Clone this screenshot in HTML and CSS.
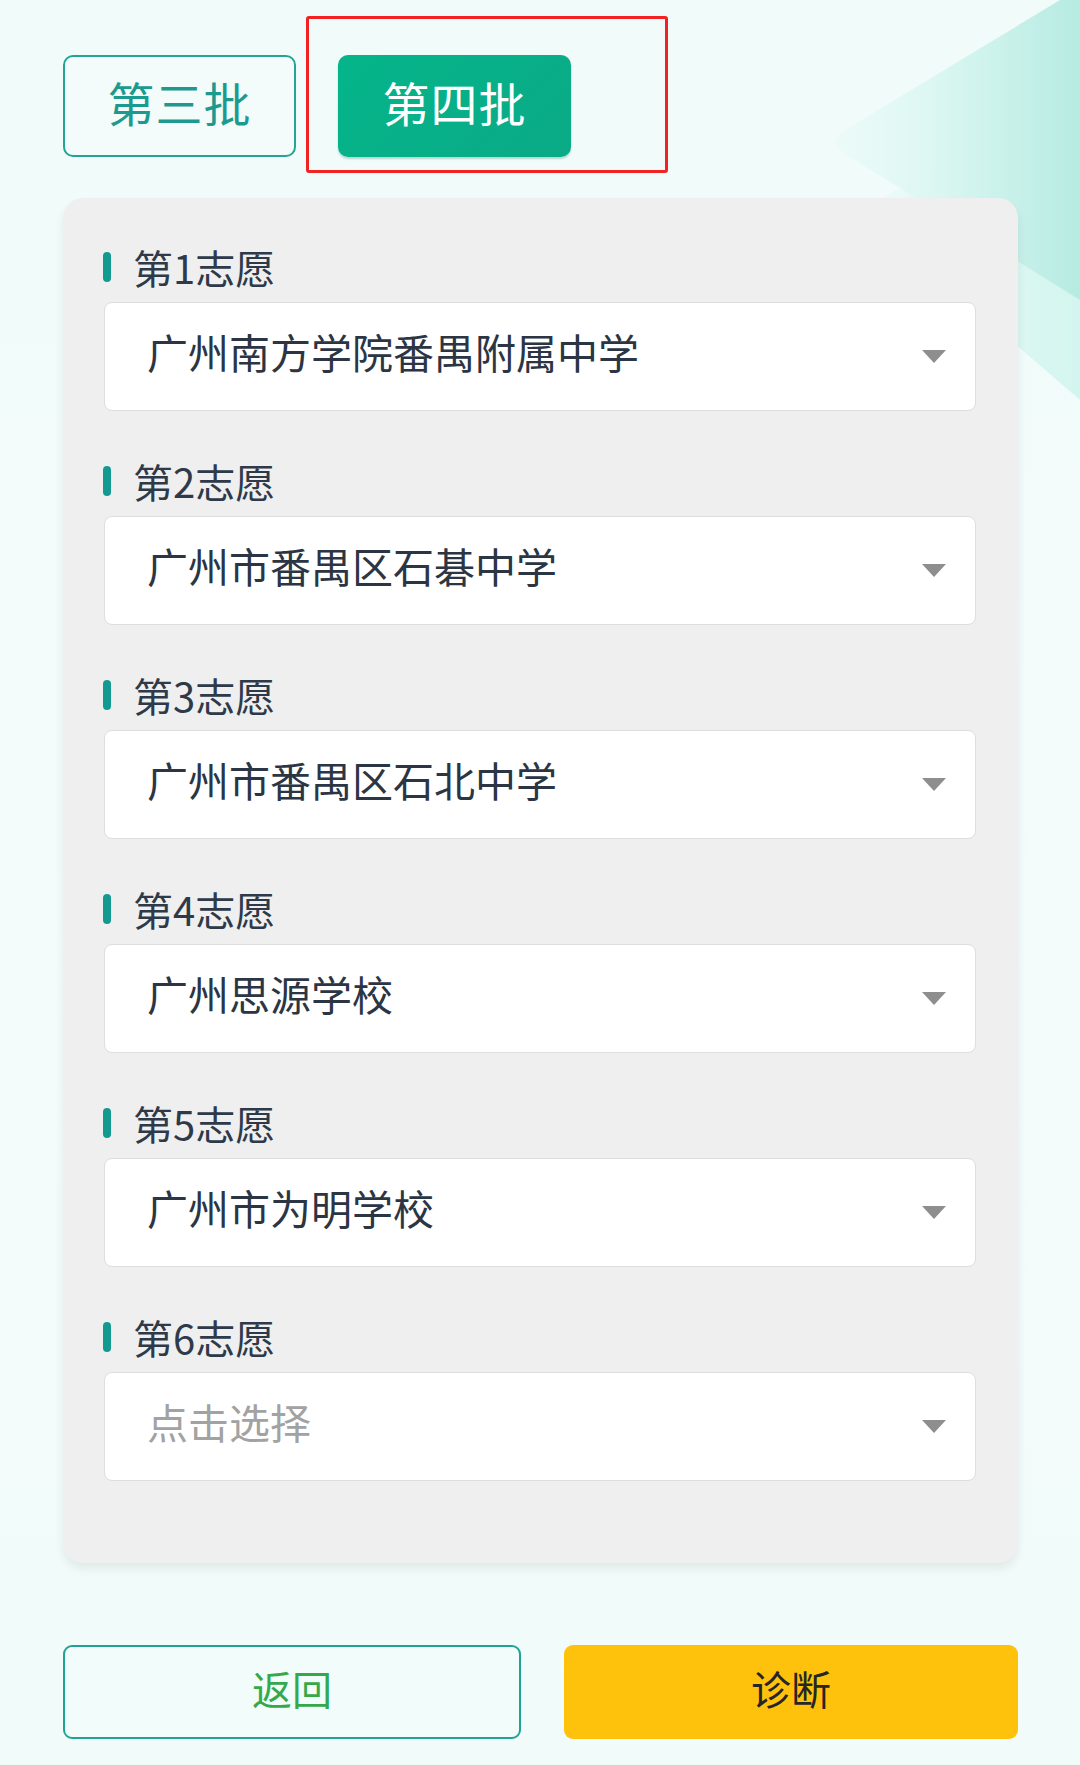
FILE: index.html
```html
<!DOCTYPE html>
<html lang="zh-CN">
<head>
<meta charset="utf-8">
<title>志愿填报</title>
<link rel="stylesheet" href="styles.css">
</head>
<body>
<div class="page">
  <svg class="deco" width="300" height="450" viewBox="780 0 300 450" aria-hidden="true">
    <defs>
      <linearGradient id="gA" x1="0" y1="0" x2="1" y2="0">
        <stop offset="0" stop-color="#e6faf6" stop-opacity="0.2"/>
        <stop offset="0.35" stop-color="#e0f8f4" stop-opacity="0.9"/>
        <stop offset="1" stop-color="#d4f5ef"/>
      </linearGradient>
      <linearGradient id="gB" x1="0" y1="0" x2="1" y2="0">
        <stop offset="0" stop-color="#e9faf7" stop-opacity="0.7"/>
        <stop offset="0.4" stop-color="#dcf7f2"/>
        <stop offset="1" stop-color="#b6ebe2"/>
      </linearGradient>
      <linearGradient id="gW" x1="0" y1="0" x2="1" y2="1">
        <stop offset="0" stop-color="#ffffff" stop-opacity="0"/>
        <stop offset="1" stop-color="#ffffff" stop-opacity="0.8"/>
      </linearGradient>
    </defs>
    <path d="M860 210 L1080 90 L1080 400 Z" fill="url(#gA)"/>
    <path d="M845 130 Q826 142 845 154 L1080 300 L1080 0 L1060 0 Z" fill="url(#gB)"/>
  </svg>

  <div class="tabs">
    <div class="tab">第三批</div>
    <div class="tab tab-active">第四批</div>
  </div>
  <div class="highlight"></div>

  <div class="card">
    <div class="field">
      <div class="label"><span class="bar"></span>第1志愿</div>
      <div class="select"><span class="value">广州南方学院番禺附属中学</span><span class="caret"></span></div>
    </div>
    <div class="field">
      <div class="label"><span class="bar"></span>第2志愿</div>
      <div class="select"><span class="value">广州市番禺区石碁中学</span><span class="caret"></span></div>
    </div>
    <div class="field">
      <div class="label"><span class="bar"></span>第3志愿</div>
      <div class="select"><span class="value">广州市番禺区石北中学</span><span class="caret"></span></div>
    </div>
    <div class="field">
      <div class="label"><span class="bar"></span>第4志愿</div>
      <div class="select"><span class="value">广州思源学校</span><span class="caret"></span></div>
    </div>
    <div class="field">
      <div class="label"><span class="bar"></span>第5志愿</div>
      <div class="select"><span class="value">广州市为明学校</span><span class="caret"></span></div>
    </div>
    <div class="field">
      <div class="label"><span class="bar"></span>第6志愿</div>
      <div class="select"><span class="value placeholder">点击选择</span><span class="caret"></span></div>
    </div>
  </div>

  <div class="actions">
    <div class="btn btn-back">返回</div>
    <div class="btn btn-diag">诊断</div>
  </div>
</div>
</body>
</html>
```

FILE: styles.css
```css
* { box-sizing: border-box; }
html, body {
  margin: 0;
  padding: 0;
}
body {
  width: 1080px;
  height: 1765px;
  background: linear-gradient(180deg, #f1fbfa 0%, #f3fcfb 60%, #f1fbfa 100%);
  font-family: "Noto Sans CJK SC", "Noto Sans", sans-serif;
  overflow: hidden;
}
.page {
  position: relative;
  width: 1080px;
  height: 1765px;
  padding: 55px 62px 0 63px;
}
.deco {
  position: absolute;
  top: 0;
  right: 0;
}
.tabs {
  position: relative;
  display: flex;
  gap: 42px;
  height: 102px;
}
.tab {
  width: 233px;
  height: 102px;
  border: 2px solid #23a596;
  border-radius: 10px;
  background: #f3fcfb;
  color: #1d9a8f;
  font-size: 47px;
  display: flex;
  align-items: center;
  justify-content: center;
  letter-spacing: 1px;
  padding-bottom: 9px;
}
.tab-active {
  border: none;
  background: linear-gradient(135deg, #05b58a 0%, #0aaa86 100%);
  color: #ffffff;
  box-shadow: 0 2px 2px rgba(0, 110, 80, 0.25);
}
.highlight {
  position: absolute;
  left: 306px;
  top: 16px;
  width: 362px;
  height: 157px;
  border: 3px solid #f22222;
  border-radius: 3px;
}
.card {
  position: relative;
  margin-top: 41px;
  width: 955px;
  height: 1365px;
  background: #efefef;
  border-radius: 20px;
  box-shadow: 0 6px 10px rgba(0, 0, 0, 0.07);
  padding: 44px 42px 82px 40px;
  display: flex;
  flex-direction: column;
  gap: 45px;
}
.field {
  display: flex;
  flex-direction: column;
  gap: 10px;
}
.label {
  height: 50px;
  display: flex;
  align-items: center;
  font-size: 40px;
  color: #2e3a4a;
}
.bar {
  width: 8px;
  height: 30px;
  border-radius: 4px;
  background: #129a90;
  margin-right: 22px;
}
.select {
  margin-left: 1px;
  height: 109px;
  background: #ffffff;
  border: 1.5px solid #dedede;
  border-radius: 8px;
  display: flex;
  align-items: center;
  justify-content: space-between;
  padding: 0 29px 0 42px;
}
.value {
  font-size: 41px;
  color: #2b3544;
  padding-bottom: 11px;
}
.placeholder {
  color: #a2a2a2;
}
.caret {
  width: 0;
  height: 0;
  border-left: 12px solid transparent;
  border-right: 12px solid transparent;
  border-top: 13px solid #8e8e8e;
}
.actions {
  margin-top: 82px;
  display: flex;
  gap: 43px;
  width: 955px;
}
.btn {
  flex: 1;
  height: 94px;
  border-radius: 9px;
  display: flex;
  align-items: center;
  justify-content: center;
  font-size: 40px;
  padding-bottom: 8px;
}
.btn-back {
  border: 2px solid #21a393;
  background: #f2fcfb;
  color: #35a94a;
}
.btn-diag {
  background: #ffc20c;
  color: #262626;
}
```
